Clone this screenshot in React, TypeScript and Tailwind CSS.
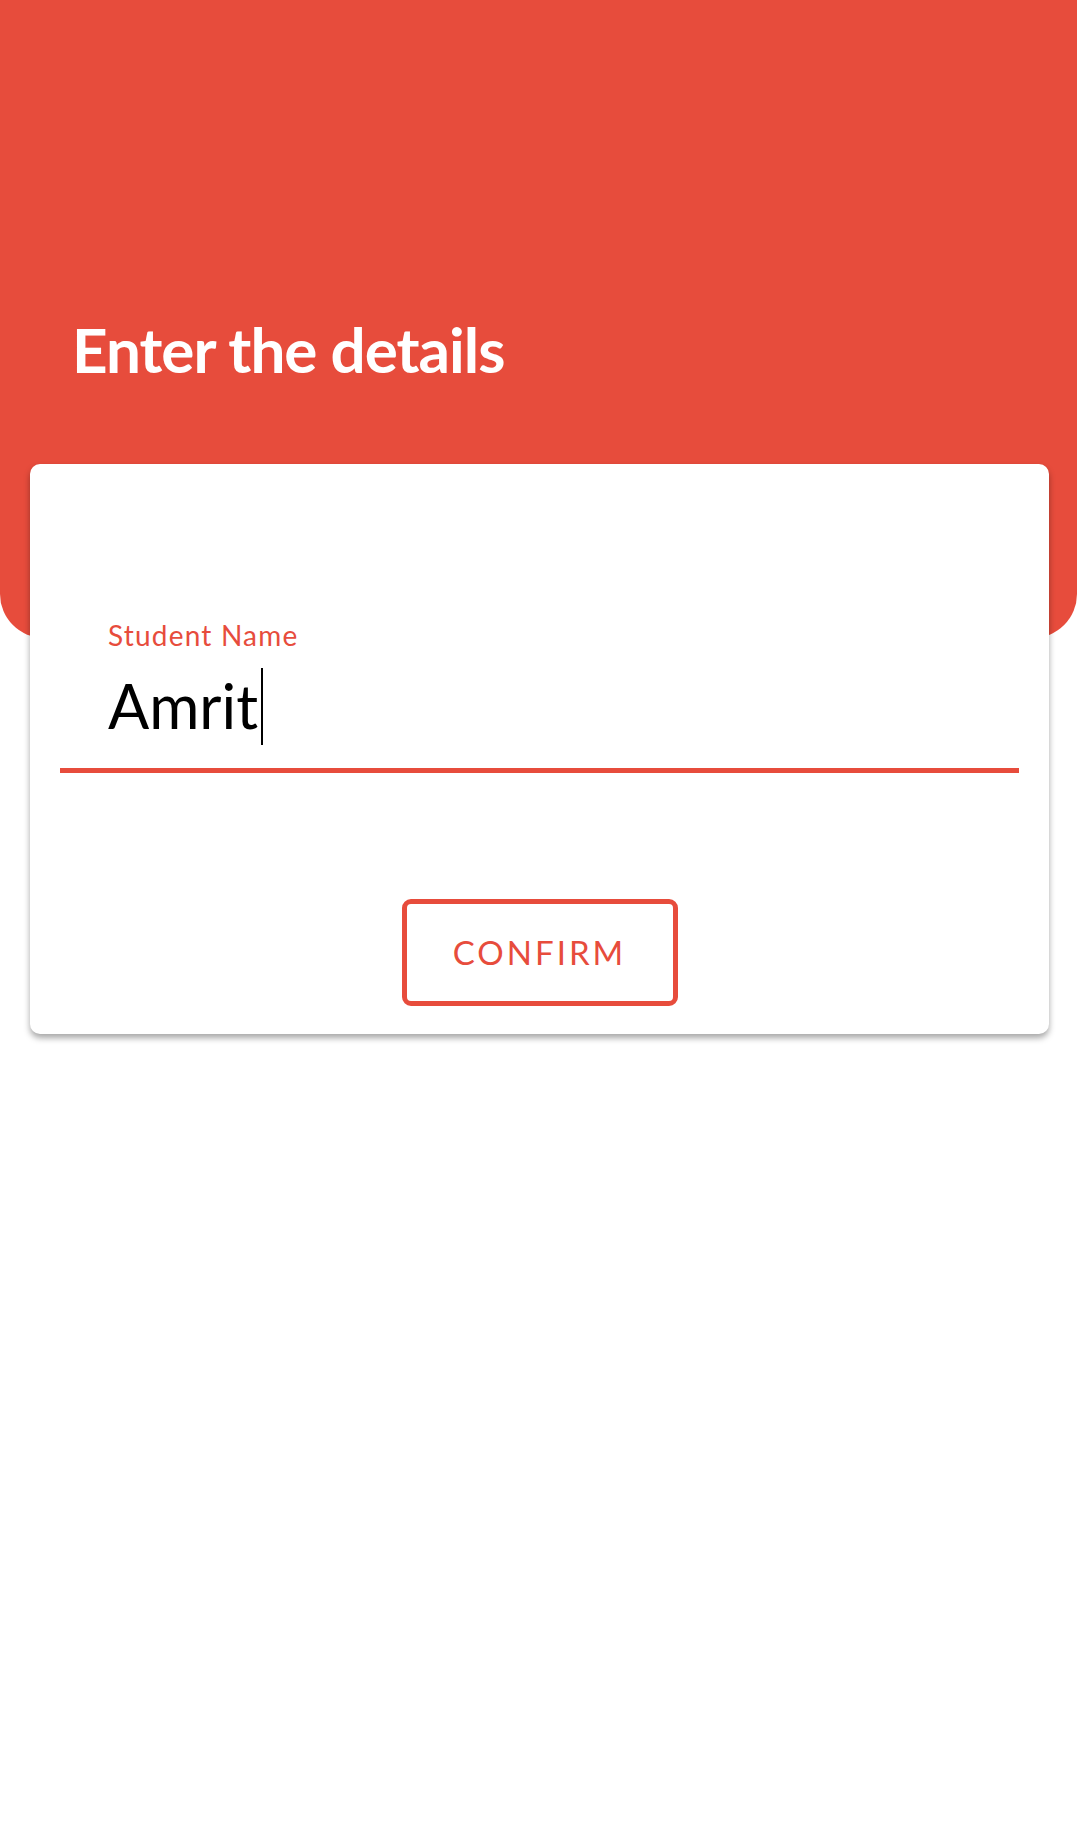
import React from "react";

export default function App() {
  return (
    <div className="min-h-[1842px] w-full bg-white" style={{ fontFamily: "Lato, 'Open Sans', sans-serif" }}>
      <div className="h-[638px] bg-[#e74c3c] rounded-b-[44px] flex flex-col">
        <h1 className="mt-[314px] ml-[72px] text-[62px] leading-[70px] font-bold text-white tracking-[-1px]">
          Enter the details
        </h1>
      </div>
      <div className="ml-[30px] mr-[28px] mt-[-174px] relative bg-white rounded-[10px] shadow-[0_4px_6px_rgba(0,0,0,0.35)] px-[30px] pt-[154px] pb-[28px]">
        <div className="pl-[48px] text-[28px] leading-[34px] tracking-[1.2px] text-[#e74c3c]">Student Name</div>
        <div className="pl-[48px] mt-[14px] flex items-center h-[80px]">
          <span className="text-[61px] leading-[80px] text-black">Amrit</span>
          <span className="ml-[3px] w-[2px] h-[77px] bg-black"></span>
        </div>
        <div className="mt-[22px] h-[5px] bg-[#e74c3c]"></div>
        <div className="mt-[126px] flex justify-center">
          <button className="w-[276px] h-[107px] border-[5px] border-[#e74c3c] rounded-[9px] text-[#e74c3c] text-[33px] tracking-[3px] bg-white">
            CONFIRM
          </button>
        </div>
      </div>
    </div>
  );
}
